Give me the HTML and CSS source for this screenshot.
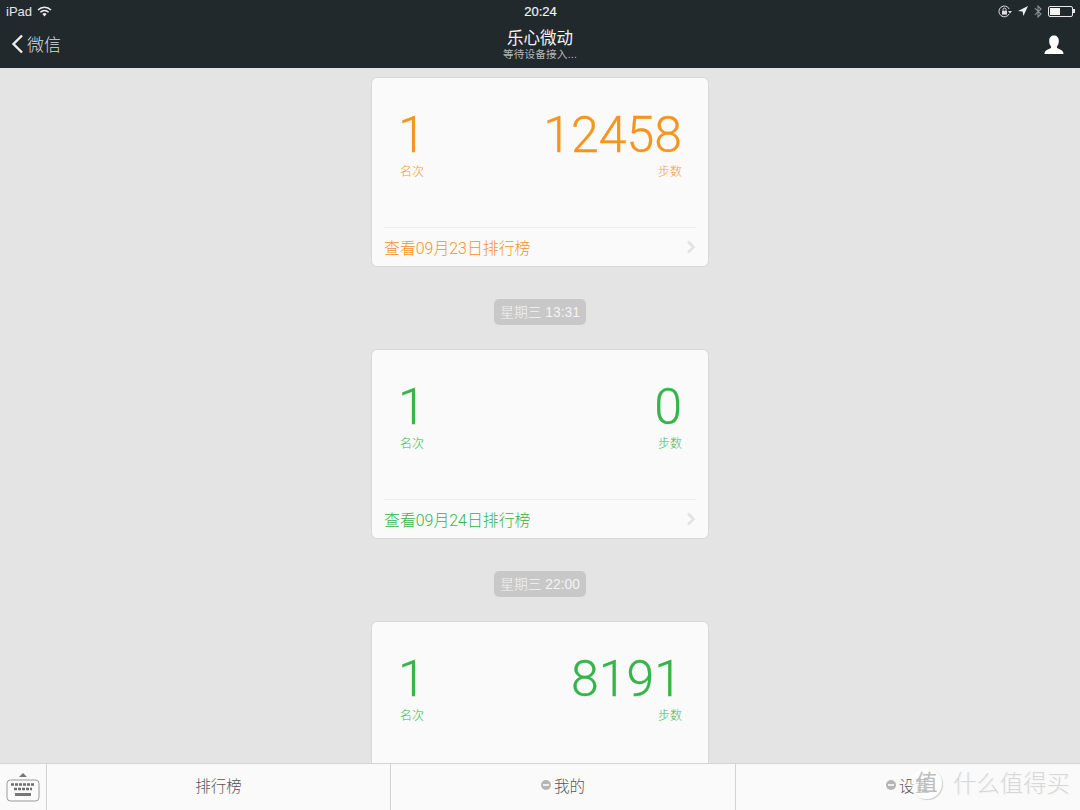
FILE: index.html
```html
<!DOCTYPE html>
<html lang="zh-CN">
  <head>
    <meta charset="UTF-8" />
    <meta name="viewport" content="width=device-width, initial-scale=1.0" />
    <title>乐心微动</title>
    <link rel="stylesheet" href="styles.css">
  </head>
  <body>
    <div class="screen">
      <header class="top">
        <div class="status">
          <div class="status-left">
            <span>iPad</span>
            <svg width="15" height="11" viewBox="0 0 15 11">
              <path d="M1 4 A9 9 0 0 1 14 4" fill="none" stroke="#eee" stroke-width="1.5" />
              <path d="M3.4 6.2 A5.6 5.6 0 0 1 11.6 6.2" fill="none" stroke="#eee" stroke-width="1.5" />
              <path d="M7.5 10.5 L5.4 8 A3 3 0 0 1 9.6 8 Z" fill="#eee" />
            </svg>
          </div>
          <div class="clock">20:24</div>
          <div class="status-right">
            <svg width="14" height="13" viewBox="0 0 14 13">
              <path d="M11.2 8.8 A5.4 5.4 0 1 1 11.2 4" fill="none" stroke="#ddd" stroke-width="1" />
              <path d="M10 6 L14 6 L12 8.4 Z" fill="#ddd" />
              <rect x="4" y="5.8" width="5" height="3.8" fill="#ddd" />
              <path d="M5 5.8 V4.6 A1.5 1.5 0 0 1 8 4.6 V5.8" fill="none" stroke="#ddd" />
            </svg>
            <svg width="10" height="10" viewBox="0 0 10 10">
              <path d="M0 5 L10 0 L5.4 10 L4.6 5.4 Z" fill="#eee" />
            </svg>
            <svg width="8" height="13" viewBox="0 0 8 13">
              <path d="M0.8 3.2 L7 9 L4 12 V1 L7 4 L0.8 9.8" fill="none" stroke="#8b9092" stroke-width="1.1" />
            </svg>
            <div class="battery"><div class="battery-level"></div></div>
          </div>
        </div>
        <div class="nav">
          <div class="back">
            <svg width="13" height="20" viewBox="0 0 13 20">
              <path d="M11 1.5 L2.5 10 L11 18.5" fill="none" stroke="#eee" stroke-width="2.4" />
            </svg>
            <span>微信</span>
          </div>
          <div class="title">
            <div class="title-main">乐心微动</div>
            <div class="title-sub">等待设备接入...</div>
          </div>
          <svg class="profile" width="20" height="20" viewBox="0 0 20 20">
            <path d="M0.5 19 C0.5 15.5 3.5 14.6 6.6 13.2 C7.4 12.8 7.2 11.6 6.6 10.8 C5.6 9.6 5.2 8.2 5.2 5.6 C5.2 2.4 7.2 0.4 10 0.4 C12.8 0.4 14.8 2.4 14.8 5.6 C14.8 8.2 14.4 9.6 13.4 10.8 C12.8 11.6 12.6 12.8 13.4 13.2 C16.5 14.6 19.5 15.5 19.5 19 Z" fill="#fff" />
          </svg>
        </div>
      </header>

      <main class="chat">
        <section class="card orange">
          <div class="stats">
            <div class="stat">
              <div class="num">1</div>
              <div class="label">名次</div>
            </div>
            <div class="stat stat-right">
              <div class="num">12458</div>
              <div class="label">步数</div>
            </div>
          </div>
          <div class="card-link">
            <span>查看09月23日排行榜</span>
            <svg width="10" height="14" viewBox="0 0 10 14">
              <path d="M2 1.5 L7.5 7 L2 12.5" fill="none" stroke="#e3e3e3" stroke-width="2.6" />
            </svg>
          </div>
        </section>

        <div class="time"><span>星期三 13:31</span></div>

        <section class="card green">
          <div class="stats">
            <div class="stat">
              <div class="num">1</div>
              <div class="label">名次</div>
            </div>
            <div class="stat stat-right">
              <div class="num">0</div>
              <div class="label">步数</div>
            </div>
          </div>
          <div class="card-link">
            <span>查看09月24日排行榜</span>
            <svg width="10" height="14" viewBox="0 0 10 14">
              <path d="M2 1.5 L7.5 7 L2 12.5" fill="none" stroke="#e3e3e3" stroke-width="2.6" />
            </svg>
          </div>
        </section>

        <div class="time"><span>星期三 22:00</span></div>

        <section class="card green">
          <div class="stats">
            <div class="stat">
              <div class="num">1</div>
              <div class="label">名次</div>
            </div>
            <div class="stat stat-right">
              <div class="num">8191</div>
              <div class="label">步数</div>
            </div>
          </div>
        </section>
      </main>

      <footer class="tabs">
        <div class="keyboard">
          <svg width="34" height="30" viewBox="0 0 34 30">
            <path d="M17 1 L21 5 H13 Z" fill="#777" />
            <rect x="1" y="8" width="32" height="21" rx="3.5" fill="#fbfbfb" stroke="#999" />
            <path d="M5 12.5 H29 M8 17 H26" stroke="#6d6d6d" stroke-width="2.4" stroke-dasharray="3 1" fill="none" />
            <rect x="9" y="21" width="16" height="3" fill="#777" />
          </svg>
        </div>
        <div class="tab">排行榜</div>
        <div class="tab"><i class="dot"></i>我的</div>
        <div class="tab"><i class="dot"></i>设置</div>
      </footer>

      <div class="watermark">
        <div class="mark-circle">值</div>
        <div class="mark-text">什么值得买</div>
      </div>
    </div>
  </body>
</html>
```

FILE: styles.css
```css
* {
  box-sizing: border-box;
}
html,
body {
  margin: 0;
  padding: 0;
}
body {
  font-family: "Liberation Sans", "Noto Sans CJK SC", sans-serif;
  background-color: #e4e4e4;
}
.screen {
  position: relative;
  width: 1080px;
  height: 810px;
  display: flex;
  flex-direction: column;
  overflow: hidden;
}
.top {
  height: 68px;
  flex: none;
  background-color: #22292d;
  color: #fff;
}
.status {
  height: 22px;
  padding: 0 5px 0 6px;
  display: grid;
  grid-template-columns: 1fr auto 1fr;
  align-items: center;
  font-size: 13px;
  color: #e4e6e6;
}
.status-left {
  display: flex;
  align-items: center;
  gap: 5px;
}
.clock {
  font-size: 13px;
  color: #f2f2f2;
  -webkit-text-stroke: 0.2px #f2f2f2;
}
.status-right {
  display: flex;
  align-items: center;
  justify-content: flex-end;
  gap: 6px;
}
.battery {
  position: relative;
  width: 25px;
  height: 11px;
  border: 1px solid #e8e8e8;
  border-radius: 2px;
  margin-right: 2px;
  padding: 1px;
}
.battery::after {
  content: "";
  position: absolute;
  right: -3px;
  top: 2.5px;
  width: 2px;
  height: 4px;
  background-color: #e8e8e8;
}
.battery-level {
  width: 10px;
  height: 100%;
  background-color: #f2f2f2;
}
.nav {
  height: 46px;
  padding: 0 11px;
  display: grid;
  grid-template-columns: 1fr auto 1fr;
  align-items: center;
}
.back {
  display: flex;
  align-items: center;
  gap: 3px;
  font-size: 17px;
  font-weight: 300;
  color: #d8dada;
  margin-bottom: 3px;
}
.title {
  text-align: center;
  margin-bottom: 2px;
}
.title-main {
  font-size: 16.5px;
  line-height: 20px;
  color: #f4f4f4;
}
.title-sub {
  font-size: 10.6px;
  line-height: 13px;
  letter-spacing: 0.2px;
  color: #b4b8b9;
}
.profile {
  justify-self: end;
  margin-right: 5px;
}
.chat {
  flex: 1;
  min-height: 0;
  overflow: hidden;
  display: flex;
  flex-direction: column;
  align-items: center;
  padding-top: 9px;
}
.card {
  width: 338px;
  height: 190px;
  flex: none;
  padding: 0 12px;
  display: flex;
  flex-direction: column;
  background-color: #fafafa;
  border: 1px solid #d8d8d8;
  border-radius: 6px;
}
.orange {
  color: #f7941e;
}
.green {
  color: #35b44a;
}
.stats {
  flex: 1;
  display: flex;
  justify-content: space-between;
  padding: 28px 14px 0 16px;
}
.stat {
  display: flex;
  flex-direction: column;
  align-items: flex-start;
}
.stat-right {
  align-items: flex-end;
}
.num {
  font-family: Roboto, "Liberation Sans", sans-serif;
  font-weight: 300;
  font-size: 50px;
  line-height: 58px;
  -webkit-text-stroke: 0.3px currentColor;
}
.stat:first-child .num {
  margin-left: -2px;
}
.label {
  font-size: 12px;
  line-height: 16px;
  font-weight: 300;
  opacity: 0.95;
}
.card-link {
  height: 39px;
  flex: none;
  display: flex;
  justify-content: space-between;
  align-items: center;
  border-top: 1px solid #efefef;
  font-family: Roboto, "Noto Sans CJK SC", sans-serif;
  font-size: 15.9px;
  font-weight: 300;
}
.time {
  height: 82px;
  flex: none;
  display: flex;
  align-items: center;
  justify-content: center;
  padding-top: 8px;
}
.time span {
  height: 26px;
  padding: 0 6px 2px;
  display: flex;
  align-items: center;
  background-color: #c8c8c8;
  border-radius: 5px;
  font-size: 13.8px;
  font-weight: 300;
  color: #f4f4f4;
}
.tabs {
  height: 47px;
  flex: none;
  display: grid;
  grid-template-columns: 47px 344px 345px 1fr;
  background-color: #fafafa;
  border-top: 1px solid #d4d4d4;
}
.keyboard {
  display: flex;
  align-items: center;
  justify-content: center;
  border-right: 1px solid #d4d4d4;
}
.tab {
  display: flex;
  align-items: center;
  justify-content: center;
  gap: 3px;
  font-size: 15.5px;
  font-weight: 300;
  color: #555;
  border-right: 1px solid #d4d4d4;
  padding-bottom: 5px;
}
.tab:last-child {
  border-right: none;
}
.dot {
  width: 10px;
  height: 10px;
  border-radius: 50%;
  background: linear-gradient(#eee, #eee) center / 6px 2px no-repeat, #b5b5b5;
}
.watermark {
  position: absolute;
  right: 10px;
  bottom: 11px;
  display: flex;
  align-items: center;
  gap: 11px;
}
.mark-circle {
  width: 31px;
  height: 31px;
  border-radius: 50%;
  font-size: 22px;
  line-height: 30px;
  text-align: center;
  background-color: rgba(255, 255, 255, 0.55);
  box-shadow: 1px 1px 1px rgba(0, 0, 0, 0.18);
  color: #bdbdbd;
}
.mark-text {
  font-size: 23.4px;
  line-height: 30px;
  font-weight: 300;
  color: #d8d8d8;
  text-shadow: 1px 1px 0 #f4f4f4;
}
```
